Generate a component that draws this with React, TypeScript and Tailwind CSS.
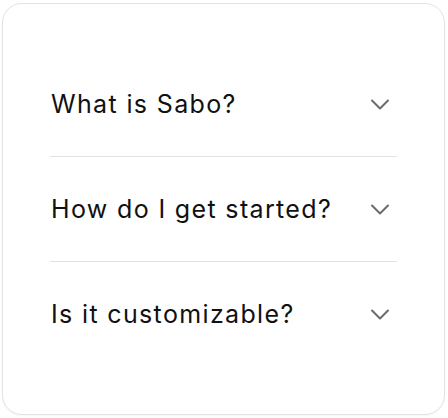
const items = ["What is Sabo?", "How do I get started?", "Is it customizable?"];

function Chevron() {
  return (
    <svg width="20" height="11" viewBox="0 0 20 11" fill="none" className="mr-[7px] shrink-0">
      <path d="M2 1.5 10 9.5 18 1.5" stroke="#6b6b6b" strokeWidth="2" strokeLinecap="round" strokeLinejoin="round" />
    </svg>
  );
}

export default function App() {
  return (
    <div className="h-[418px] w-[448px] bg-white pl-[2px] pt-[3px]" style={{ fontFamily: "Inter, 'Noto Sans', sans-serif" }}>
      <div className="h-[412px] w-[443px] rounded-[20px] border border-[#e3e3e3] bg-white px-[47px] py-[48px] shadow-[0_1px_2px_rgba(0,0,0,0.04)]">
        {items.map((q, i) => (
          <div
            key={q}
            className={`flex h-[105px] items-center justify-between ${i < items.length - 1 ? "border-b border-[#e2e2e2]" : ""}`}
          >
            <span className="pl-[1px] text-[25px] leading-none tracking-[1.35px] text-[#111111]">{q}</span>
            <Chevron />
          </div>
        ))}
      </div>
    </div>
  );
}
